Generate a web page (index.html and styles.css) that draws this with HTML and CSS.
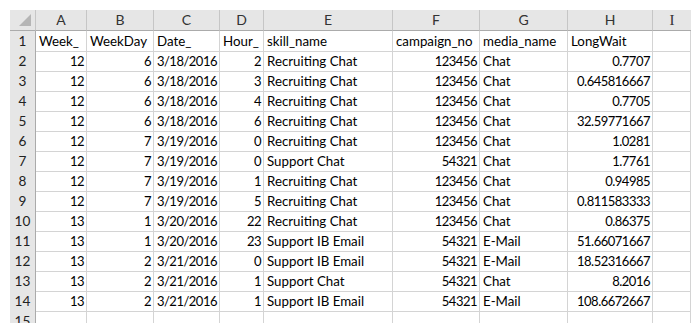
FILE: index.html
```html
<!DOCTYPE html>
<html>
<head>
<meta charset="utf-8">
<link rel="stylesheet" href="styles.css">
</head>
<body>
<div class="sheet">
  <div class="row head">
    <div class="corner"><svg width="12" height="12" viewBox="0 0 12 12"><polygon points="12,0 12,12 0,12" fill="#b5b5b5"/></svg></div>
    <div class="ch">A</div><div class="ch">B</div><div class="ch">C</div><div class="ch">D</div><div class="ch">E</div><div class="ch">F</div><div class="ch">G</div><div class="ch">H</div><div class="ch last"><span class="ii">I</span></div>
  </div>
  <div class="row"><div class="rh">1</div><div class="c">Week_</div><div class="c">WeekDay</div><div class="c">Date_</div><div class="c">Hour_</div><div class="c">skill_name</div><div class="c">campaign_no</div><div class="c">media_name</div><div class="c">LongWait</div><div class="c"></div></div>
  <div class="row"><div class="rh">2</div><div class="c n">12</div><div class="c n">6</div><div class="c n">3/18/2016</div><div class="c n">2</div><div class="c">Recruiting Chat</div><div class="c n">123456</div><div class="c">Chat</div><div class="c n">0.7707</div><div class="c"></div></div>
  <div class="row"><div class="rh">3</div><div class="c n">12</div><div class="c n">6</div><div class="c n">3/18/2016</div><div class="c n">3</div><div class="c">Recruiting Chat</div><div class="c n">123456</div><div class="c">Chat</div><div class="c n">0.645816667</div><div class="c"></div></div>
  <div class="row"><div class="rh">4</div><div class="c n">12</div><div class="c n">6</div><div class="c n">3/18/2016</div><div class="c n">4</div><div class="c">Recruiting Chat</div><div class="c n">123456</div><div class="c">Chat</div><div class="c n">0.7705</div><div class="c"></div></div>
  <div class="row"><div class="rh">5</div><div class="c n">12</div><div class="c n">6</div><div class="c n">3/18/2016</div><div class="c n">6</div><div class="c">Recruiting Chat</div><div class="c n">123456</div><div class="c">Chat</div><div class="c n">32.59771667</div><div class="c"></div></div>
  <div class="row"><div class="rh">6</div><div class="c n">12</div><div class="c n">7</div><div class="c n">3/19/2016</div><div class="c n">0</div><div class="c">Recruiting Chat</div><div class="c n">123456</div><div class="c">Chat</div><div class="c n">1.0281</div><div class="c"></div></div>
  <div class="row"><div class="rh">7</div><div class="c n">12</div><div class="c n">7</div><div class="c n">3/19/2016</div><div class="c n">0</div><div class="c">Support Chat</div><div class="c n">54321</div><div class="c">Chat</div><div class="c n">1.7761</div><div class="c"></div></div>
  <div class="row"><div class="rh">8</div><div class="c n">12</div><div class="c n">7</div><div class="c n">3/19/2016</div><div class="c n">1</div><div class="c">Recruiting Chat</div><div class="c n">123456</div><div class="c">Chat</div><div class="c n">0.94985</div><div class="c"></div></div>
  <div class="row"><div class="rh">9</div><div class="c n">12</div><div class="c n">7</div><div class="c n">3/19/2016</div><div class="c n">5</div><div class="c">Recruiting Chat</div><div class="c n">123456</div><div class="c">Chat</div><div class="c n">0.811583333</div><div class="c"></div></div>
  <div class="row"><div class="rh">10</div><div class="c n">13</div><div class="c n">1</div><div class="c n">3/20/2016</div><div class="c n">22</div><div class="c">Recruiting Chat</div><div class="c n">123456</div><div class="c">Chat</div><div class="c n">0.86375</div><div class="c"></div></div>
  <div class="row"><div class="rh">11</div><div class="c n">13</div><div class="c n">1</div><div class="c n">3/20/2016</div><div class="c n">23</div><div class="c">Support IB Email</div><div class="c n">54321</div><div class="c">E-Mail</div><div class="c n">51.66071667</div><div class="c"></div></div>
  <div class="row"><div class="rh">12</div><div class="c n">13</div><div class="c n">2</div><div class="c n">3/21/2016</div><div class="c n">0</div><div class="c">Support IB Email</div><div class="c n">54321</div><div class="c">E-Mail</div><div class="c n">18.52316667</div><div class="c"></div></div>
  <div class="row"><div class="rh">13</div><div class="c n">13</div><div class="c n">2</div><div class="c n">3/21/2016</div><div class="c n">1</div><div class="c">Support Chat</div><div class="c n">54321</div><div class="c">Chat</div><div class="c n">8.2016</div><div class="c"></div></div>
  <div class="row"><div class="rh">14</div><div class="c n">13</div><div class="c n">2</div><div class="c n">3/21/2016</div><div class="c n">1</div><div class="c">Support IB Email</div><div class="c n">54321</div><div class="c">E-Mail</div><div class="c n">108.6672667</div><div class="c"></div></div>
  <div class="row"><div class="rh">15</div><div class="c"></div><div class="c"></div><div class="c"></div><div class="c"></div><div class="c"></div><div class="c"></div><div class="c"></div><div class="c"></div><div class="c"></div></div>
</div>
</body>
</html>
```

FILE: styles.css
```css
html, body {
  margin: 0;
  padding: 0;
  background: #ffffff;
}
body {
  padding: 10px 4px 0 10px;
  font-family: Lato, "Liberation Sans", sans-serif;
  font-size: 13.3px;
  color: #000;
}
.sheet {
  width: 681px;
  height: 313px;
  overflow: hidden;
  background: #fff;
}
.row {
  display: grid;
  grid-template-columns: 26px 51px 67px 66px 44px 129px 87px 88px 85px 38px;
  height: 20px;
}
.row.head {
  height: 21px;
}
.row > div {
  box-sizing: border-box;
  border-right: 1px solid #d4d4d4;
  border-bottom: 1px solid #d4d4d4;
  line-height: 20px;
  white-space: nowrap;
}
.head > div {
  background: #e6e6e6;
  border-bottom: 1px solid #ababab;
  border-right: 1px solid #c6c6c6;
  line-height: 20px;
  text-align: center;
  color: #333;
  font-size: 14px;
}
.head > .last {
  border-right: none;
}
.corner {
  display: flex;
  align-items: flex-end;
  justify-content: flex-end;
  padding: 0 4px 4px 0;
}
.corner svg {
  display: block;
}
.ii {
  font-family: "Liberation Serif", serif;
  font-size: 15px;
}
.row > .rh {
  background: #e6e6e6;
  border-right: 1px solid #ababab;
  border-bottom: 1px solid #c6c6c6;
  text-align: center;
  color: #222;
  font-size: 13.6px;
}
.c {
  padding: 0 3px;
}
.c.n {
  display: flex;
  justify-content: flex-end;
  font-size: 13px;
  letter-spacing: -0.5px;
  padding-right: 2px;
}
```
